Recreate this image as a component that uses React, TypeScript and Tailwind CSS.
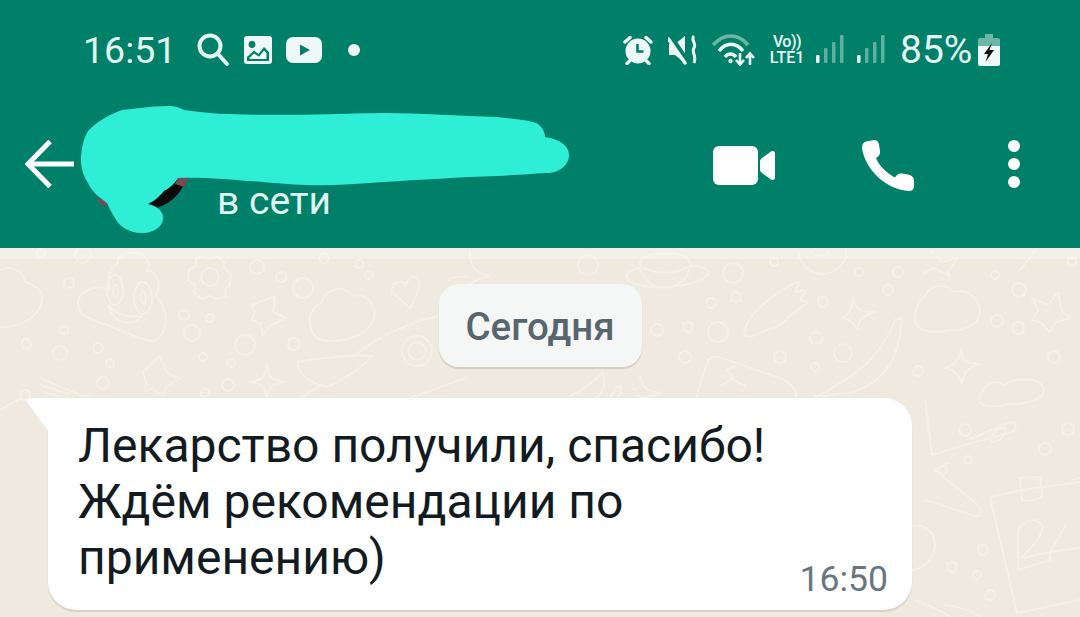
import React from "react";

const circles: [number, number, number][] = [
  [69,283,5],[64,330,4],[60,353,7],[98,348,5],[110,363,4],[103,383,6],[203,357,4],[231,363,4],[228,385,6],[205,393,4],
  [184,315,5],[210,318,4],[192,333,8],[245,345,10],[294,344,6],[303,288,10],[281,277,5],[257,267,7],[369,275,4],[359,264,4],
  [324,258,5],[83,255,8],[41,253,4],[588,265,10],[733,273,10],[774,262,4],[711,303,5],[736,297,5],[657,330,6],[688,327,5],
  [718,332,10],[685,357,6],[780,357,6],[816,338,6],[815,367,4],[843,353,9],[823,302,5],[859,272,4],[898,272,5],[888,290,5],
  [1019,290,7],[995,275,4],[997,321,6],[1018,328,6],[918,371,5],[1054,357,6],[965,430,6],[1068,429,6],[1045,449,6],[983,550,5],
  [952,567,5],[977,575,4],[990,595,5],[968,460,4],[943,470,4],[25,395,5],[1072,262,4],[417,351,15],[417,351,9],
];

const doodles = [
  "M0 327C18 328 40 318 42 300C44 288 30 284 25 282C22 268 8 266 0 270",
  "M86 317C76 311 74 296 88 290C96 286 106 288 110 290C106 276 110 266 118 264C116 256 128 250 142 254C150 260 150 268 146 270C158 272 162 284 156 296C168 308 170 330 156 340C150 342 146 340 140 338Z",
  "M107 290A8 15 0 1 0 123 290A8 15 0 1 0 107 290ZM134 298A9 16 0 1 0 152 298A9 16 0 1 0 134 298Z",
  "M113 291A2.5 6 0 1 0 118 291A2.5 6 0 1 0 113 291ZM141 298A2.5 6 0 1 0 146 298A2.5 6 0 1 0 141 298Z",
  "M108 306C116 314 128 318 142 316C136 326 114 326 108 306Z",
  "M196 258L204 256L208 259L216 256L224 262L224 268L231 274L230 284L225 289L226 296L216 299L210 296L202 299L194 292L195 286L188 280L189 270L196 266Z",
  "M201 277A9 9 0 1 0 219 277A9 9 0 1 0 201 277Z",
  "M251 305L275 296L273 312L286 318L270 326L263 335L260 323L251 320L255 312Z",
  "M310 320C310 308 318 306 322 302C326 288 344 284 352 296C368 292 378 308 374 318C370 336 340 344 322 340C314 338 310 330 310 320Z",
  "M392 292C392 282 402 278 406 286C408 272 424 274 418 290C416 298 412 304 410 308Z",
  "M143 372L160 356L168 374L180 378L167 386L163 395L152 388L145 392L146 382Z",
  "M267 364C268 376 270 380 284 382C272 384 269 386 267 398C265 386 262 384 250 382C264 380 265 376 267 364Z",
  "M297 362C320 358 355 354 372 356C364 366 345 378 330 386C316 388 298 375 297 362Z M322 384L302 398M438 316C410 322 370 340 355 356M465 378L410 398",
  "M470 252C470 264 472 272 490 276C472 280 468 285 467 291M467 277C455 276 450 278 448 280",
  "M40 378C55 384 80 396 90 398M40 385L70 394M44 392L65 398",
  "M0 410L14 402L22 398",
  "M24 338C20 344 22 350 28 349C34 346 30 340 24 338Z",
  "M640 263A25 25 0 1 0 690 263C690 250 640 250 640 263Z",
  "M640 268C620 272 624 284 640 285C660 290 700 286 708 274C710 268 700 266 692 266M644 268C655 274 675 274 686 268",
  "M798 250C800 270 820 280 835 270C845 265 848 255 845 248M810 250C815 258 825 258 830 250",
  "M930 250L942 262L958 258L948 272L950 276L934 268L923 274",
  "M1020 270L1036 250",
  "M745 330C750 310 775 295 790 285L800 282L795 292L806 290L800 300L808 302L795 312L780 325L755 335C748 338 742 336 745 330Z",
  "M853 298C855 310 860 312 875 312C862 316 858 320 858 330C853 322 848 318 842 318C850 314 852 308 853 298Z",
  "M895 320L902 318L900 335C895 365 880 385 850 393L815 397C850 380 880 360 895 320Z",
  "M915 320C915 308 918 300 925 296C932 282 948 284 952 292C968 288 978 298 980 310C982 322 965 332 950 330C935 334 915 332 915 320Z",
  "M1032 298L1048 305L1058 292L1062 312L1072 318L1056 322L1050 332L1040 322L1032 320L1038 310Z",
  "M961 348C962 362 966 364 980 364C966 368 964 372 962 384C958 374 956 370 944 368C958 364 960 358 961 348Z",
  "M980 396C984 384 998 378 1004 386C1015 376 1040 378 1044 388C1046 398 1030 404 1010 404C995 408 975 408 980 396Z",
  "M570 396C590 386 600 376 602 372C606 382 604 392 596 398M610 398C615 390 618 384 620 386C622 392 620 396 618 398",
  "M640 376C642 388 645 391 662 393C650 396 646 398 645 398C644 398 640 396 636 396M636 390L632 388",
  "M696 398L708 360C712 356 716 356 722 358L780 378C790 382 796 388 796 398M720 386L734 378L726 370L735 366M730 378L745 386",
  "M925 400L932 455L965 445L1012 432C1018 428 1016 422 1010 422L968 440M925 500L975 516C982 518 982 510 978 505L935 470L948 463",
  "M990 442C992 430 1000 428 1006 428C1004 438 1000 442 990 442Z",
  "M912 525C935 525 940 545 930 560C925 565 918 570 912 570",
  "M990 497L1022 490L1058 485L1080 482M990 497L1017 613L1080 600M1020 478C1022 478 1040 476 1040 478L1042 495C1042 500 1024 502 1022 500ZM1072 480L1080 478",
  "M1018 530C1026 516 1044 518 1042 530C1040 540 1028 550 1022 558L1050 552L1050 560L1018 570Z",
  "M1066 525L1050 552L1080 548",
  "M915 600C930 606 945 612 950 617M945 605C965 608 975 612 980 617",
];

function Doodles() {
  return (
    <svg className="absolute inset-0 w-full h-full" viewBox="0 248 1080 369" fill="none" stroke="#f5f0e9" strokeWidth="2" strokeLinejoin="round" strokeLinecap="round">
      {doodles.map((d, i) => <path key={i} d={d} />)}
      {circles.map(([x, y, r], i) => <circle key={i} cx={x} cy={y} r={r} />)}
    </svg>
  );
}

function StatusLeft() {
  return (
    <div className="flex items-center">
      <span className="text-[37.5px] leading-[44px] text-[#e3f6f2] w-[113px]">16:51</span>
      <svg width="34" height="34" viewBox="0 0 34 34" fill="none" stroke="#e3f6f2" strokeWidth="4" strokeLinecap="round" className="mr-[14px]">
        <circle cx="14" cy="13" r="10.5" />
        <path d="M22 21L31 31" />
      </svg>
      <svg width="28" height="28" viewBox="0 0 28 28" className="mr-[14px]">
        <rect width="28" height="28" rx="3" fill="#eef9f7" />
        <circle cx="8" cy="8.5" r="3.4" fill="#008069" />
        <path d="M3 25V21L10 14.5L14.5 18L20 11L25 16V25ZM5.5 23H22.5V17L20 14.5L15 20.8L10 17.5L5.5 21.8Z" fill="#008069" fillRule="evenodd" />
      </svg>
      <svg width="36" height="26" viewBox="0 0 36 26">
        <rect width="36" height="26" rx="7" fill="#eef9f7" />
        <path d="M14 7.5L24 13L14 18.5Z" fill="#008069" />
      </svg>
      <div className="w-3 h-3 rounded-full bg-[#eef9f7] ml-[26px]" />
    </div>
  );
}

function Signal() {
  return (
    <svg width="28" height="29" viewBox="0 0 28 29">
      <rect x="0" y="20" width="3.5" height="8" rx="1.2" fill="#eef9f7" />
      <rect x="8" y="13" width="3.5" height="15" rx="1" fill="#5fb09e" />
      <rect x="16" y="7" width="3.5" height="21" rx="1" fill="#5fb09e" />
      <rect x="24" y="0" width="3.5" height="28" rx="1" fill="#5fb09e" />
    </svg>
  );
}

function StatusRight() {
  return (
    <div className="flex items-center">
      <svg width="30" height="30" viewBox="0 0 30 30" className="mr-[15px]">
        <circle cx="15" cy="16" r="12.5" fill="#eef9f7" />
        <path d="M14.5 9V16.5H20.5" fill="none" stroke="#008069" strokeWidth="2.6" />
        <path d="M2 7L7 2.5M23 2.5L28 7M6.5 26L4 28.5M23.5 26L26 28.5" stroke="#eef9f7" strokeWidth="3.4" strokeLinecap="round" />
      </svg>
      <svg width="30" height="30" viewBox="0 0 30 30" className="mr-[14px]">
        <path d="M1 9H7L17 1V28L7 20H1Z" fill="#eef9f7" />
        <path d="M2 2L19 27" stroke="#008069" strokeWidth="6.5" />
        <path d="M0.5 4L17 28" stroke="#eef9f7" strokeWidth="3.4" strokeLinecap="round" />
        <path d="M26 1C22 5 29 8 26 13C23 17 29 20 26 28" fill="none" stroke="#eef9f7" strokeWidth="3" />
      </svg>
      <svg width="44" height="32" viewBox="0 0 44 32" fill="none" className="mr-[12px]">
        <path d="M1 11C12 -1 26 -1 36 11" stroke="#6cb6a6" strokeWidth="3.6" />
        <path d="M7 17C14 8 24 8 31 17" stroke="#eef9f7" strokeWidth="3.4" />
        <path d="M13 23C16 19 21 19 24 23" stroke="#eef9f7" strokeWidth="3.4" />
        <circle cx="18.5" cy="27" r="2.2" fill="#eef9f7" />
        <path d="M28 19V30M24 26L28 30.5L32 26M38 31V20M34 24L38 19.5L42 24" stroke="#eef9f7" strokeWidth="2.6" />
      </svg>
      <div className="flex flex-col items-center w-[38px] mr-[10px] text-[#eef9f7] font-medium">
        <span className="block h-[16px] text-[16px] leading-[16px] tracking-[-0.5px]">Vo))</span>
        <span className="block h-[16px] text-[16px] leading-[16px]">LTE1</span>
      </div>
      <Signal />
      <div className="w-[13px]" />
      <Signal />
      <span className="text-[39px] leading-[44px] text-[#e3f6f2] ml-[15px] w-[78px]">85%</span>
      <svg width="22" height="32" viewBox="0 0 22 32">
        <path d="M7 0H15V4H20C21 4 22 5 22 6V13H0V6C0 5 1 4 2 4H7Z" fill="#6cb6a6" />
        <path d="M0 12H22V30C22 31 21 32 20 32H2C1 32 0 31 0 30Z" fill="#eef9f7" />
        <path d="M14 9L6 20H10L7.5 28L16 16H11.5Z" fill="#111" />
      </svg>
    </div>
  );
}

function Scribble() {
  return (
    <svg className="absolute left-0 top-0 pointer-events-none" width="600" height="248" viewBox="0 0 600 248">
      <path d="M187 176C184 190 172 205 152 209L146 200L168 188L176 176Z" fill="#0b0b0b" />
      <path d="M178 177H188C187 181 186 184 184 187L175 184Z" fill="#7b4a55" />
      <path d="M96 197L105 201L107 207L101 205Z" fill="#7b4a55" />
      <path
        fill="#2eefd6"
        d="M122 110C135 109 150 106 168 106C176 106 180 108 184 110C200 112 215 114 230 114C280 116 330 114 383 113C420 113 460 116 497 117C515 119 528 120 536 123C542 126 545 132 545 137C560 139 569 146 569 155C569 166 558 173 547 173C530 174 515 175 497 176C460 177 420 180 383 182C355 184 330 186 306 185C270 184 215 176 178 178C175 183 170 188 164 191C158 198 154 201 148 204C158 206 163 212 163 218C163 227 153 233 142 233C128 233 119 226 115 218C111 212 109 207 107 203C99 197 92 192 88 183C83 175 81 168 81 160C81 148 84 138 88 131C96 122 110 114 122 110Z"
      />
    </svg>
  );
}

export default function App() {
  return (
    <div className="w-[1080px] h-[617px] overflow-hidden flex flex-col bg-[#f0e9e0] font-['Roboto',sans-serif]">
      <header className="relative h-[248px] shrink-0 bg-[#008069] flex flex-col">
        <div className="h-[99px] pl-[83px] pr-[80px] flex items-center justify-between">
          <StatusLeft />
          <StatusRight />
        </div>
        <div className="flex items-start justify-between pl-[25px] pr-[60px] pt-[41px]">
          <svg width="49" height="48" viewBox="0 0 49 48" fill="none" stroke="#fff" strokeWidth="5">
            <path d="M49 24H4M25 1.5L3 24L25 46.5" />
          </svg>
          <div className="flex items-start">
            <svg width="62" height="40" viewBox="0 0 62 40" className="mr-[87px] mt-[6px]">
              <rect width="45" height="39" rx="6" fill="#fff" />
              <path d="M47 15C47 14 48 13 49 12L58 5.5C60 4.5 62 5.5 62 7V32C62 33.5 60 34.5 58 33.5L49 27C48 26 47 25 47 24Z" fill="#fff" />
            </svg>
            <svg width="52" height="52" viewBox="0 0 52 52" className="mr-[94px]">
              <path d="M4 1.5L12 0C15 0 16.5 2 17 4.5L18 11C18.5 14 17 16 14 18C17 26 25 33 33 37.5C35 34 37 33 40 33.5L48 35C50.5 36 52 38 52 41V46C52 49 50 51 47 51C25 50 3 30 0 8C0 5 1 2.5 4 1.5Z" fill="#fff" />
            </svg>
            <div className="flex flex-col gap-[6px]">
              <div className="w-3 h-3 rounded-full bg-white" />
              <div className="w-3 h-3 rounded-full bg-white" />
              <div className="w-3 h-3 rounded-full bg-white" />
            </div>
          </div>
        </div>
        <div className="pl-[217px] -mt-[11px] text-[39px] leading-[40px] text-[#dff5f1]">в сети</div>
        <Scribble />
      </header>
      <main className="relative flex-1 flex flex-col items-start">
        <Doodles />
        <div className="absolute left-0 top-0 w-full h-[11px] bg-white/30" />
        <div className="relative self-center mt-[36px] h-[83px] w-[203px] pt-[2px] rounded-[20px] bg-[#f5f6f6] shadow-[0_2px_1px_rgba(110,90,70,0.2)] flex items-center justify-center text-[38.5px] font-medium text-[#56656e]">
          Сегодня
        </div>
        <div className="relative ml-[48px] mt-[31px] w-[864px] h-[212px] rounded-[28px] rounded-tl-none bg-white shadow-[0_2px_1px_rgba(110,90,70,0.18)] pl-[30px] pt-[20px]">
          <svg className="absolute -left-[21px] top-0" width="30" height="34" viewBox="0 0 30 34">
            <path d="M30 0H5C0 0 -1 3 2 7L22 34H30Z" fill="#fff" />
          </svg>
          <p className="relative text-[48px] leading-[56px] text-[#111b21]">
            Лекарство получили, спасибо!
            <br />
            Ждём рекомендации по
            <br />
            применению)
          </p>
          <span className="absolute right-[24px] bottom-[11px] text-[35.5px] leading-[40px] text-[#667781]">16:50</span>
        </div>
      </main>
    </div>
  );
}
